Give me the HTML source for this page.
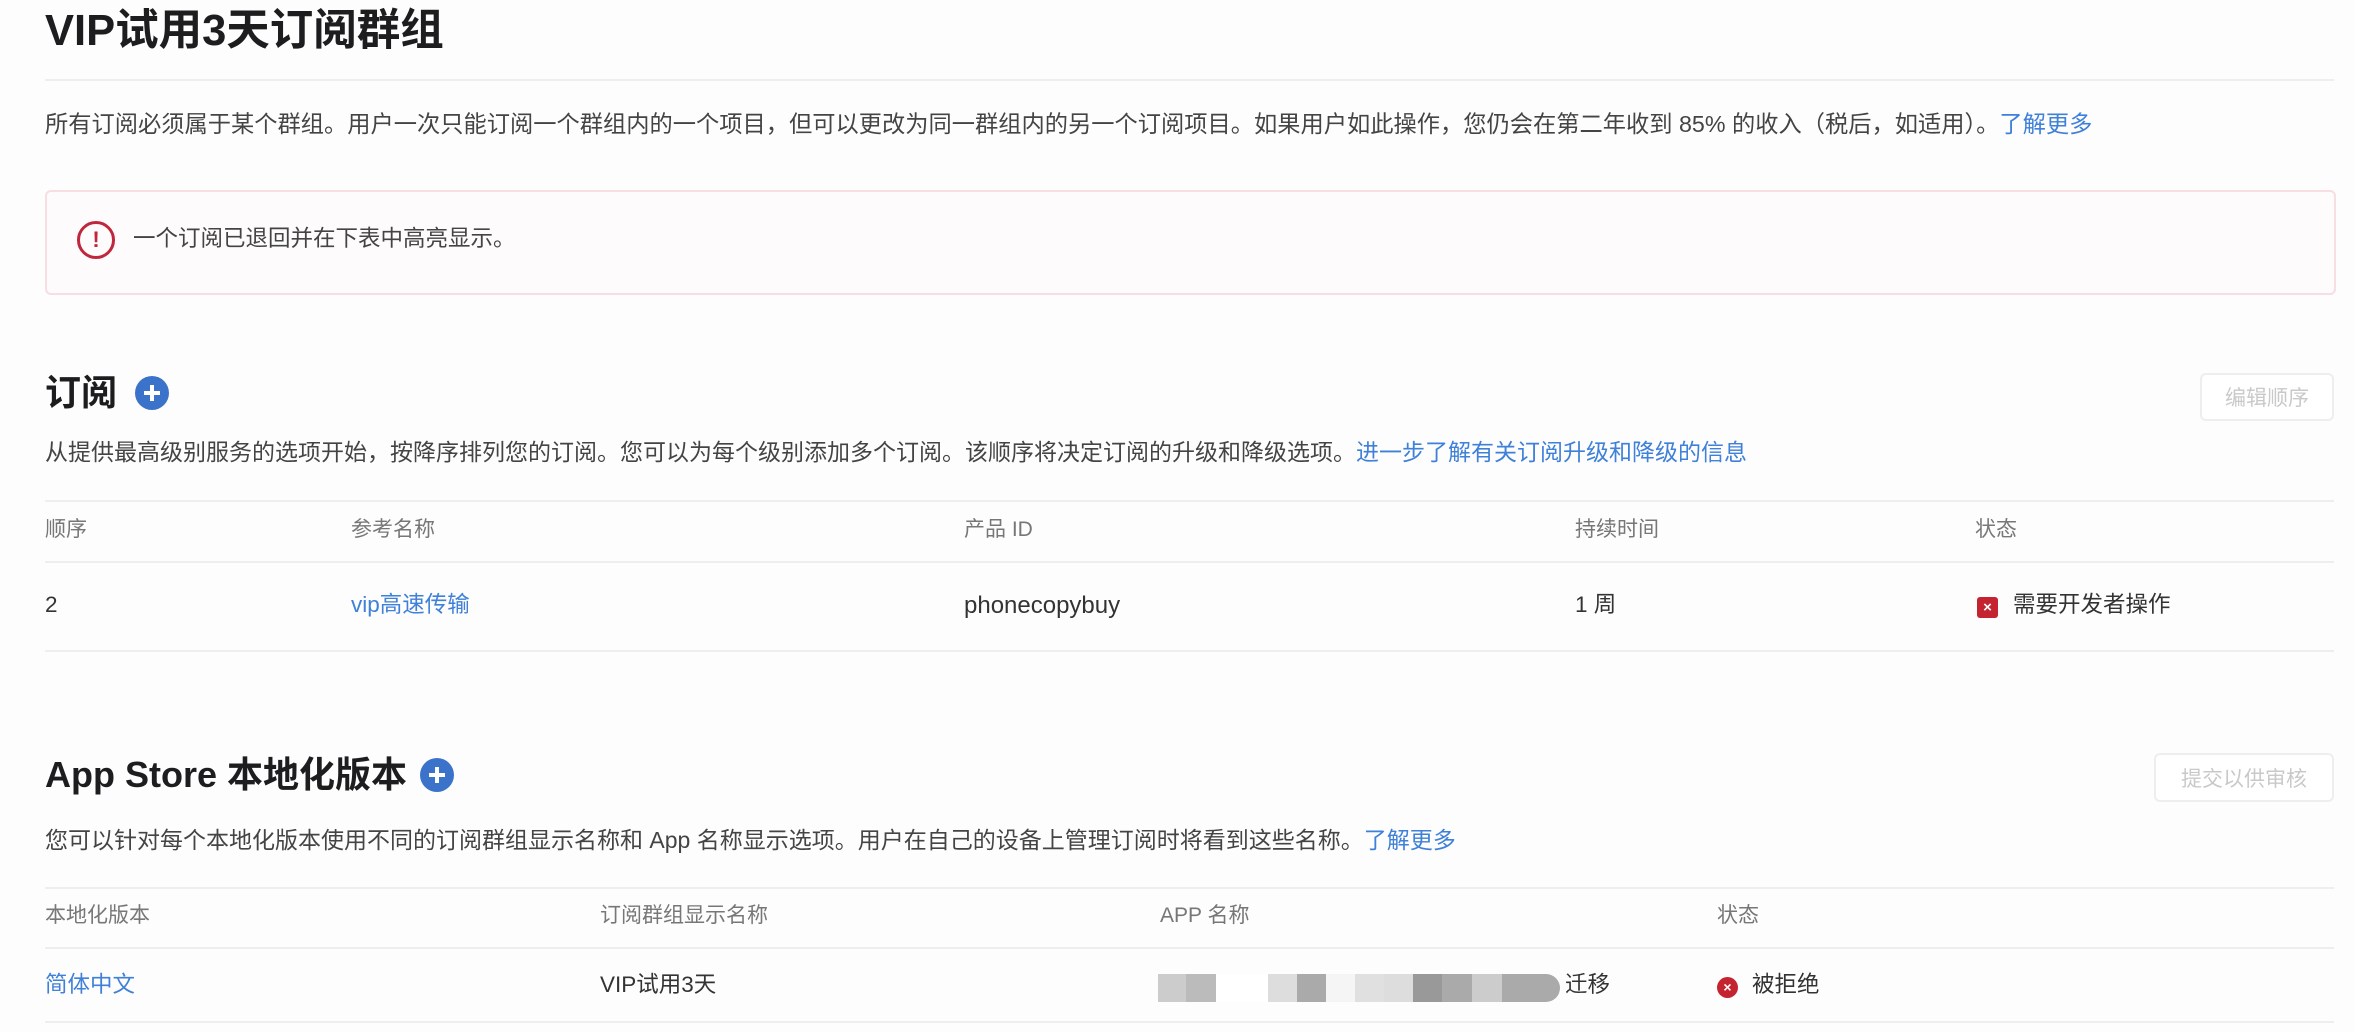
<!DOCTYPE html>
<html><head><meta charset="utf-8"><style>
*{margin:0;padding:0;box-sizing:border-box}
body{width:2354px;height:1032px;background:#fdfdfd;font-family:"Liberation Sans","Noto Sans CJK SC",sans-serif;color:#333;position:relative;overflow:hidden}
.a{position:absolute;white-space:nowrap;line-height:1}
.h1{font-size:43.5px;font-weight:bold;color:#1d1d1f}
.h2{font-size:36px;font-weight:bold;color:#1d1d1f}
.d{font-size:23px;color:#444}
.th{font-size:21px;color:#777}
.td{font-size:22.5px;color:#333}
.l{color:#3f80d8}
.hr{position:absolute;left:45px;right:20px;height:2px;background:#eeeeee}
.plus{position:absolute;width:34px;height:34px;border-radius:50%;background:#3a73c9;color:#fff}
.plus:before{content:"";position:absolute;left:9px;top:15px;width:16px;height:4px;background:#fff}
.plus:after{content:"";position:absolute;left:15px;top:9px;width:4px;height:16px;background:#fff}
.btn{position:absolute;border:2px solid #eee;border-radius:6px;color:#c9c9c9;font-size:21px;display:flex;align-items:center;justify-content:center;background:#fff}
</style></head><body>
<div class="a h1" style="left:45px;top:10px">VIP试用3天订阅群组</div>
<div class="hr" style="top:79px"></div>
<div class="a d" style="left:45px;top:113px;font-size:23.25px">所有订阅必须属于某个群组。用户一次只能订阅一个群组内的一个项目，但可以更改为同一群组内的另一个订阅项目。如果用户如此操作，您仍会在第二年收到 85% 的收入（税后，如适用）。<span class="l">了解更多</span></div>
<div style="position:absolute;left:45px;top:190px;width:2291px;height:105px;border:2px solid #f8dde3;border-radius:6px;background:#fdfbfb"></div>
<div style="position:absolute;left:77px;top:221px;width:38px;height:38px;border-radius:50%;border:3px solid #c0273d;color:#c0273d;font-weight:bold;font-size:22px;text-align:center;line-height:32px">!</div>
<div class="a d" style="left:133px;top:228px;font-size:22.5px">一个订阅已退回并在下表中高亮显示。</div>

<div class="a h2" style="left:45px;top:375px">订阅</div>
<div class="plus" style="left:135px;top:376px"></div>
<div class="btn" style="left:2200px;top:373px;width:134px;height:48px">编辑顺序</div>
<div class="a d" style="left:45px;top:441px">从提供最高级别服务的选项开始，按降序排列您的订阅。您可以为每个级别添加多个订阅。该顺序将决定订阅的升级和降级选项。<span class="l">进一步了解有关订阅升级和降级的信息</span></div>
<div class="hr" style="top:500px"></div>
<div class="a th" style="left:45px;top:519px">顺序</div>
<div class="a th" style="left:351px;top:519px">参考名称</div>
<div class="a th" style="left:964px;top:519px">产品 ID</div>
<div class="a th" style="left:1575px;top:519px">持续时间</div>
<div class="a th" style="left:1975px;top:519px">状态</div>
<div class="hr" style="top:561px"></div>
<div class="a td" style="left:45px;top:594px">2</div>
<div class="a td l" style="left:351px;top:594px">vip高速传输</div>
<div class="a td" style="left:964px;top:594px;font-size:24px">phonecopybuy</div>
<div class="a td" style="left:1575px;top:594px">1 周</div>
<div style="position:absolute;left:1977px;top:597px;width:21px;height:21px;background:#c4242f;border-radius:3px;color:#fff;font-size:15px;font-weight:bold;text-align:center;line-height:21px">×</div>
<div class="a td" style="left:2013px;top:594px">需要开发者操作</div>
<div class="hr" style="top:650px"></div>

<div class="a h2" style="left:45px;top:757px">App Store 本地化版本</div>
<div class="plus" style="left:420px;top:758px"></div>
<div class="btn" style="left:2154px;top:753px;width:180px;height:49px">提交以供审核</div>
<div class="a d" style="left:45px;top:829px">您可以针对每个本地化版本使用不同的订阅群组显示名称和 App 名称显示选项。用户在自己的设备上管理订阅时将看到这些名称。<span class="l">了解更多</span></div>
<div class="hr" style="top:887px"></div>
<div class="a th" style="left:45px;top:905px">本地化版本</div>
<div class="a th" style="left:600px;top:905px">订阅群组显示名称</div>
<div class="a th" style="left:1160px;top:905px">APP 名称</div>
<div class="a th" style="left:1717px;top:905px">状态</div>
<div class="hr" style="top:947px"></div>
<div class="a td l" style="left:45px;top:974px">简体中文</div>
<div class="a td" style="left:600px;top:974px">VIP试用3天</div>
<div style="position:absolute;left:1158px;top:974px;height:28px;width:402px;display:flex;border-radius:0 14px 14px 0;overflow:hidden">
<div style="width:28px;background:#ccc"></div><div style="width:30px;background:#bbb"></div><div style="width:52px;background:#fff"></div><div style="width:29px;background:#ddd"></div><div style="width:29px;background:#aaa"></div><div style="width:29px;background:#f5f5f5"></div><div style="width:29px;background:#e0e0e0"></div><div style="width:29px;background:#ddd"></div><div style="width:29px;background:#999"></div><div style="width:30px;background:#aaa"></div><div style="width:30px;background:#ccc"></div><div style="width:58px;background:#aaa"></div>
</div>
<div class="a td" style="left:1565px;top:974px">迁移</div>
<div style="position:absolute;left:1717px;top:977px;width:21px;height:21px;border-radius:50%;background:#c4242f;color:#fff;font-size:14px;font-weight:bold;text-align:center;line-height:21px">×</div>
<div class="a td" style="left:1752px;top:974px">被拒绝</div>
<div class="hr" style="top:1021px"></div>
</body></html>
